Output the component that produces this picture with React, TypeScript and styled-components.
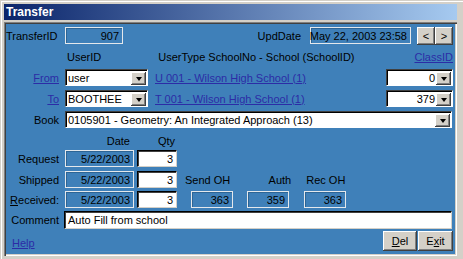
import React from 'react';
import styled, { createGlobalStyle } from 'styled-components';

const BLUE = '#3f80b9';

const Global = createGlobalStyle`
  html, body { margin: 0; padding: 0; background: #d4d0c8; }
  body { font-family: "Liberation Sans", Arial, sans-serif; font-size: 11px; color: #000; }
  * { box-sizing: border-box; }
`;

const Window = styled.div`
  width: 463px;
  height: 259px;
  background: #d4d0c8;
  border-top: 1px solid #d4d0c8;
  border-left: 1px solid #d4d0c8;
  box-shadow: inset 1px 1px 0 #ffffff;
  padding: 3px 6px 3px 3px;
  display: flex;
  flex-direction: column;
`;

const TitleBar = styled.div`
  height: 16px;
  flex: none;
  background: linear-gradient(to right, #0a246a, #a6caf0);
  color: #fff;
  font-weight: bold;
  font-size: 12px;
  display: flex;
  align-items: center;
  padding-left: 2px;
`;

const Client = styled.div`
  margin-top: 2px;
  flex: 1;
  background: ${BLUE};
  box-shadow: inset 1px 1px 0 #808080, inset 2px 2px 0 #404040, inset -1px -1px 0 #ffffff, inset -2px -2px 0 #d4d0c8;
  padding: 2px 4px 2px 2px;
  display: flex;
  flex-direction: column;
`;

const Row = styled.div<{ $top: number; $h?: number }>`
  display: flex;
  align-items: center;
  margin-top: ${p => p.$top}px;
  height: ${p => p.$h ?? 17}px;
  flex: none;
`;

const Label = styled.span<{ $w?: number; $ml?: number; $align?: string }>`
  width: ${p => (p.$w ? `${p.$w}px` : 'auto')};
  margin-left: ${p => p.$ml ?? 0}px;
  text-align: ${p => p.$align ?? 'right'};
  white-space: nowrap;
  flex: none;
`;

const LabelCell = styled(Label)`
  margin-right: 6px;
`;

const Link = styled.a<{ $w?: number; $ml?: number; $align?: string; $mt?: number }>`
  color: #2c2ca6;
  text-decoration: underline;
  white-space: nowrap;
  cursor: pointer;
  flex: none;
  width: ${p => (p.$w ? `${p.$w}px` : 'auto')};
  margin-left: ${p => p.$ml ?? 0}px;
  margin-top: ${p => p.$mt ?? 0}px;
  text-align: ${p => p.$align ?? 'left'};
`;

const Spacer = styled.div`
  flex: 1;
`;

const ROBox = styled.div<{ $w: number; $ml?: number; $h?: number }>`
  width: ${p => p.$w}px;
  height: ${p => p.$h ?? 17}px;
  margin-left: ${p => p.$ml ?? 0}px;
  flex: none;
  border: 1px solid #e4e8ec;
  box-shadow: inset 1px 1px 0 #2d6595;
  background: ${BLUE};
  display: flex;
  align-items: center;
  justify-content: flex-end;
  padding-right: 3px;
  white-space: nowrap;
`;

const Input = styled.div<{ $w: number; $ml?: number; $h?: number; $align?: string }>`
  width: ${p => p.$w}px;
  height: ${p => p.$h ?? 17}px;
  margin-left: ${p => p.$ml ?? 0}px;
  flex: none;
  background: #fff;
  border-style: solid;
  border-width: 1px;
  border-color: #000 #d4d0c8 #d4d0c8 #000;
  box-shadow: inset 1px 1px 0 #404040;
  display: flex;
  align-items: center;
  justify-content: ${p => (p.$align === 'left' ? 'flex-start' : 'flex-end')};
  padding: 0 3px;
  white-space: nowrap;
`;

const Combo = styled.div<{ $w: number; $ml?: number }>`
  width: ${p => p.$w}px;
  height: 17px;
  margin-left: ${p => p.$ml ?? 0}px;
  flex: none;
  background: #fff;
  border-style: solid;
  border-width: 1px;
  border-color: #404040 #ffffff #ffffff #404040;
  box-shadow: inset 1px 1px 0 #000;
  display: flex;
  align-items: center;
  padding: 1px 0 0 2px;
`;

const ComboText = styled.span<{ $align?: string }>`
  flex: 1;
  text-align: ${p => p.$align ?? 'left'};
  white-space: nowrap;
  overflow: hidden;
  padding-right: 1px;
`;

const DropBtn = styled.div`
  width: 15px;
  height: 13px;
  flex: none;
  background: #d4d0c8;
  box-shadow: inset -1px -1px 0 #404040, inset 1px 1px 0 #ffffff, inset -2px -2px 0 #808080;
  display: flex;
  align-items: center;
  justify-content: center;
  margin-right: 1px;
`;

const Arrow = styled.div`
  width: 0;
  height: 0;
  border-left: 3.5px solid transparent;
  border-right: 3.5px solid transparent;
  border-top: 4px solid #000;
  margin-top: 1px;
`;

const Button = styled.div<{ $w: number; $h: number; $ml?: number }>`
  width: ${p => p.$w}px;
  height: ${p => p.$h}px;
  margin-left: ${p => p.$ml ?? 0}px;
  flex: none;
  background: #d4d0c8;
  box-shadow: inset -1px -1px 0 #404040, inset 1px 1px 0 #ffffff, inset -2px -2px 0 #808080;
  display: flex;
  align-items: center;
  justify-content: center;
  font-size: 11px;
`;

const U = styled.span`
  text-decoration: underline;
`;

const Dropdown: React.FC<{ w: number; ml?: number; text: string; align?: string }> = ({ w, ml, text, align }) => (
  <Combo $w={w} $ml={ml}>
    <ComboText $align={align}>{text}</ComboText>
    <DropBtn>
      <Arrow />
    </DropBtn>
  </Combo>
);

export default function App() {
  return (
    <>
      <Global />
      <Window>
        <TitleBar>Transfer</TitleBar>
        <Client>
          <Row $top={3}>
            <Label $w={51}>TransferID</Label>
            <ROBox $w={58} $ml={8}>907</ROBox>
            <Spacer />
            <Label>UpdDate</Label>
            <ROBox $w={101} $ml={9}>May 22, 2003 23:58</ROBox>
            <Button $w={18} $h={18} $ml={6}>&lt;</Button>
            <Button $w={18} $h={18}>&gt;</Button>
          </Row>
          <Row $top={6} $h={13}>
            <Label $ml={61} $align="left">UserID</Label>
            <Label $ml={57} $align="left">UserType SchoolNo - School (SchoolID)</Label>
            <Spacer />
            <Link>ClassID</Link>
          </Row>
          <Row $top={6}>
            <Link $w={53} $align="right">From</Link>
            <Dropdown w={83} ml={6} text="user" />
            <Link $ml={7}>U 001 - Wilson High School (1)</Link>
            <Spacer />
            <Dropdown w={67} text="0" align="right" />
          </Row>
          <Row $top={4}>
            <Link $w={53} $align="right">To</Link>
            <Dropdown w={83} ml={6} text="BOOTHEE" />
            <Link $ml={7}>T 001 - Wilson High School (1)</Link>
            <Spacer />
            <Dropdown w={67} text="379" align="right" />
          </Row>
          <Row $top={4}>
            <LabelCell $w={53}>Book</LabelCell>
            <Dropdown w={387} text="0105901 - Geometry: An Integrated Approach (13)" />
          </Row>
          <Row $top={6} $h={14}>
            <Label $w={124}>Date</Label>
            <Label $ml={28} $align="left">Qty</Label>
          </Row>
          <Row $top={2}>
            <LabelCell $w={53}>Request</LabelCell>
            <ROBox $w={69}>5/22/2003</ROBox>
            <Input $w={40} $ml={3}>3</Input>
          </Row>
          <Row $top={4}>
            <LabelCell $w={53}>Shipped</LabelCell>
            <ROBox $w={69}>5/22/2003</ROBox>
            <Input $w={40} $ml={3}>3</Input>
            <Label $ml={8} $align="left">Send OH</Label>
            <Label $w={42} $ml={19}>Auth</Label>
            <Label $ml={15} $align="left">Rec OH</Label>
          </Row>
          <Row $top={3}>
            <LabelCell $w={53}>
              <U>R</U>eceived:
            </LabelCell>
            <ROBox $w={69}>5/22/2003</ROBox>
            <Input $w={40} $ml={3}>3</Input>
            <ROBox $w={42} $ml={14}>363</ROBox>
            <ROBox $w={42} $ml={14}>359</ROBox>
            <ROBox $w={42} $ml={15}>363</ROBox>
          </Row>
          <Row $top={3} $h={18}>
            <Label $w={53}>Comment</Label>
            <Input $w={388} $ml={5} $h={18} $align="left">Auto Fill from school</Input>
          </Row>
          <Row $top={2} $h={20}>
            <Link $ml={6} $mt={3}>Help</Link>
            <Spacer />
            <Button $w={34} $h={20}>
              <U>D</U>el
            </Button>
            <Button $w={35} $h={20} $ml={1}>
              E<U>x</U>it
            </Button>
          </Row>
        </Client>
      </Window>
    </>
  );
}
